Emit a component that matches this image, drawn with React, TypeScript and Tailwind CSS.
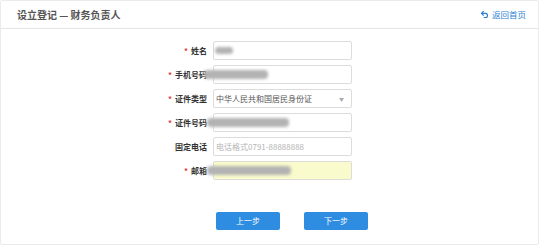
import { Undo2 } from "lucide-react";

const FONT = "font-['Microsoft_YaHei','Noto_Sans_CJK_SC',sans-serif]";

function Blur({ className }: { className: string }) {
  return (
    <span
      className={`pointer-events-none absolute rounded-sm bg-[#b3b3b3] blur-[1.5px] ${className}`}
    />
  );
}

function Row({
  label,
  required,
  children,
}: {
  label: string;
  required?: boolean;
  children: React.ReactNode;
}) {
  return (
    <div className="relative flex h-[19px] items-center">
      <div className="w-[207px] pr-[1px] text-right text-[8px] font-bold text-[#333]">
        {required && <span className="mr-[3px] text-[#e4393c]">*</span>}
        {label}
      </div>
      <div className="ml-[5px] h-full w-[139px]">{children}</div>
    </div>
  );
}

function Field({ yellow, placeholder }: { yellow?: boolean; placeholder?: string }) {
  return (
    <div
      className={`flex h-full w-full items-center rounded-[2px] border border-[#dcdcdc] pl-[2px] text-[8px] text-[#b5b5b5] ${
        yellow ? "bg-[#fafbcc]" : "bg-white"
      }`}
    >
      {placeholder}
    </div>
  );
}

export default function App() {
  return (
    <div className={`h-[245px] w-[539px] bg-white ${FONT}`}>
      <div className="h-full w-full rounded-[2px] border border-[#ebebeb]">
        {/* Header */}
        <div className="flex h-[28px] items-center justify-between border-b border-[#e6e6e6] pl-[16px] pr-[12px]">
          <span className="text-[10px] font-bold text-[#555]">设立登记 — 财务负责人</span>
          <a href="#" className="flex items-center gap-[3px] text-[8.5px] text-[#2b7fd4]">
            <Undo2 size={9} strokeWidth={3} />
            返回首页
          </a>
        </div>

        {/* Form */}
        <div className="flex flex-col gap-[5px] pt-[12px]">
          <Row label="姓名" required>
            <Field />
            <Blur className="left-[214px] top-[6px] h-[7px] w-[18px] bg-[#8f8f8f]" />
          </Row>
          <Row label="手机号码" required>
            <Field />
            <Blur className="left-[203px] top-[5px] h-[9px] w-[64px]" />
          </Row>
          <Row label="证件类型" required>
            <div className="flex h-full w-full items-center justify-between rounded-[2px] border border-[#dcdcdc] bg-white pl-[2px] pr-[7px] text-[8px] text-[#555]">
              中华人民共和国居民身份证
              <span className="text-[5px] text-[#aaa]">▼</span>
            </div>
          </Row>
          <Row label="证件号码" required>
            <Field />
            <Blur className="left-[206px] top-[5px] h-[9px] w-[82px]" />
          </Row>
          <Row label="固定电话">
            <Field placeholder="电话格式0791-88888888" />
          </Row>
          <Row label="邮箱" required>
            <Field yellow />
            <Blur className="left-[206px] top-[5px] h-[9px] w-[84px]" />
          </Row>
        </div>

        {/* Buttons */}
        <div className="flex gap-[24px] pl-[215px] pt-[32px]">
          <button className="h-[18px] w-[64px] rounded-[2px] bg-[#2e8de0] text-[8px] text-white">
            上一步
          </button>
          <button className="h-[18px] w-[64px] rounded-[2px] bg-[#2e8de0] text-[8px] text-white">
            下一步
          </button>
        </div>
      </div>
    </div>
  );
}
